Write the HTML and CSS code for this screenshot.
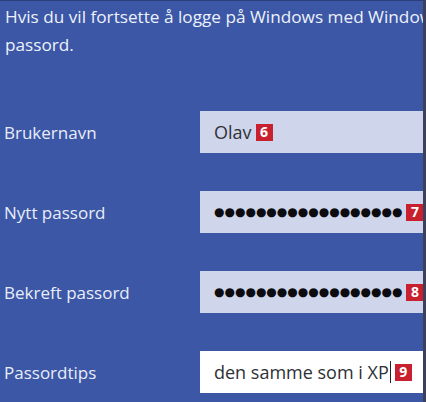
FILE: index.html
```html
<!DOCTYPE html>
<html lang="no">
<head>
<meta charset="utf-8">
<link rel="stylesheet" href="styles.css">
</head>
<body>
<div class="screen">
  <div class="intro">
    <div class="line">Hvis du vil fortsette å logge på Windows med Windows Live-ID</div>
    <div class="line">passord.</div>
  </div>
  <div class="form">
    <div class="row">
      <div class="label">Brukernavn</div>
      <div class="field"><span class="value">Olav</span><span class="badge">6</span></div>
    </div>
    <div class="row">
      <div class="label">Nytt passord</div>
      <div class="field"><span class="dots">●●●●●●●●●●●●●●●●●●</span><span class="badge">7</span></div>
    </div>
    <div class="row">
      <div class="label">Bekreft passord</div>
      <div class="field"><span class="dots">●●●●●●●●●●●●●●●●●●</span><span class="badge">8</span></div>
    </div>
    <div class="row">
      <div class="label">Passordtips</div>
      <div class="field active"><span class="value">den samme som i XP</span><span class="caret"></span><span class="badge">9</span></div>
    </div>
  </div>
</div>
</body>
</html>
```

FILE: styles.css
```css
html, body {
  margin: 0;
  padding: 0;
}
body {
  width: 426px;
  height: 402px;
  overflow: hidden;
  background: #3b57a6;
  font-family: "Open Sans", "Noto Sans", sans-serif;
}
.screen {
  height: 402px;
  box-sizing: border-box;
  border-top: 1px solid #2c3f78;
  border-right: 3px solid #3c4058;
  overflow: hidden;
}
.intro {
  padding: 2px 0 0 5px;
  color: #eef1fb;
  font-size: 17.2px;
  line-height: 28px;
}
.line {
  white-space: nowrap;
  overflow: hidden;
}
.form {
  margin-top: 52px;
  display: flex;
  flex-direction: column;
  gap: 38px;
}
.row {
  display: grid;
  grid-template-columns: 200px 1fr;
  align-items: center;
  height: 42px;
}
.label {
  padding-left: 4px;
  color: #e9edf9;
  font-size: 17px;
}
.field {
  height: 42px;
  background: #cfd6ec;
  display: flex;
  align-items: center;
  padding-left: 14px;
  color: #2e3136;
  font-size: 18px;
  white-space: nowrap;
}
.field.active {
  background: #ffffff;
}
.value {
  line-height: 1;
}
.dots {
  font-family: "DejaVu Sans", sans-serif;
  font-size: 12px;
  color: #0c0c10;
  line-height: 1;
}
.caret {
  width: 1px;
  height: 22px;
  background: #222;
  margin-left: 1px;
}
.badge {
  display: inline-flex;
  align-items: center;
  justify-content: center;
  width: 17px;
  height: 17px;
  margin-left: 4px;
  background: #c8202f;
  color: #fff;
  font-family: "Open Sans", sans-serif;
  font-weight: 700;
  font-size: 14px;
  line-height: 1;
}
```
